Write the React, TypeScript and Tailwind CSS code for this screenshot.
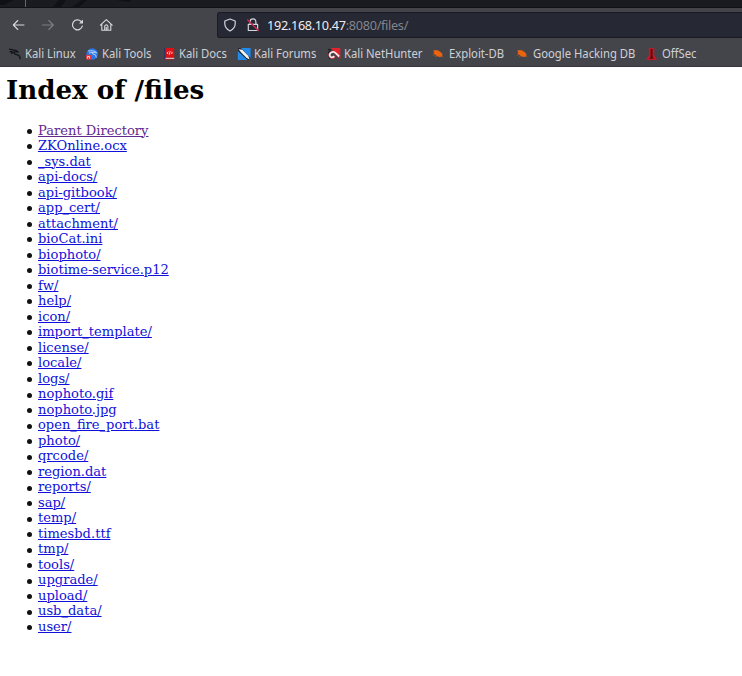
import type { ReactNode } from 'react';

const files = [
  'Parent Directory', 'ZKOnline.ocx', '_sys.dat', 'api-docs/', 'api-gitbook/', 'app_cert/', 'attachment/',
  'bioCat.ini', 'biophoto/', 'biotime-service.p12', 'fw/', 'help/', 'icon/', 'import_template/', 'license/',
  'locale/', 'logs/', 'nophoto.gif', 'nophoto.jpg', 'open_fire_port.bat', 'photo/', 'qrcode/', 'region.dat',
  'reports/', 'sap/', 'temp/', 'timesbd.ttf', 'tmp/', 'tools/', 'upgrade/', 'upload/', 'usb_data/', 'user/',
];

function Mark({ children }: { children: ReactNode }) {
  return <svg className="h-[14px] w-[14px] shrink-0" viewBox="0 0 14 14" fill="none">{children}</svg>;
}

const Bug = () => (
  <Mark>
    <path d="M1.2 3.8 3.5 3l2.8.4 2.9 2.2 1.3 2-.4 1.9-2.6.4-2.8-.9-1.7-1.6-1.5-.6.7-1z" fill="#ea640e" />
    <path d="m.7 8.3 2.3-.6M3 10l2-1.2M9.8 8.9l1.3 1.3" stroke="#a8592c" strokeWidth=".7" />
  </Mark>
);

const bookmarks: { label: string; width: string; icon: ReactNode }[] = [
  {
    label: 'Kali Linux', width: 'w-[77px]',
    icon: <Mark>
      <path d="m1 2.2 4 .6 3.2.7 2.3 1.7-2.7-.7-1.9.8.9 1.8 3 .8 1.8 1.3.6 3.2M1.5 4.9l3-.6M3 6.6l2.4-1.5" stroke="#111419" strokeWidth="1.3" />
    </Mark>,
  },
  {
    label: 'Kali Tools', width: 'w-[77px]',
    icon: <Mark>
      <circle cx="7.2" cy="7" r="5.8" fill="#2877e9" />
      <path d="m3 4 4-.3 3 .7 1.7 1.5L8 5.3l-.6 1.5 3.1 1.1.8 2.7M4 6l4-.7" stroke="#c3d6f4" strokeWidth=".9" />
      <rect x="1" y="7.8" width="5" height="5" rx="1" fill="#e23842" />
      <path d="M2.5 11.5V9.6h2v1.9" stroke="#fff" strokeWidth=".8" />
    </Mark>,
  },
  {
    label: 'Kali Docs', width: 'w-[75px]',
    icon: <Mark>
      <path d="M2.3 1h1.5v11H2.3z" fill="#222e75" />
      <path d="M3.5 1h8.7v9.8H3.5z" fill="#df1014" />
      <path d="M3.5 10.8h8.7v1.4H3.5z" fill="#d5bec2" />
      <path d="M2.6 12.2h9.6v.9H2.6z" fill="#a01923" />
      <path d="M6.2 4.7 5 5.9l1.2 1.2M9.2 4.7l1.2 1.2-1.2 1.2M8.1 4.3l-.8 3.3" stroke="#fff" strokeWidth=".8" />
    </Mark>,
  },
  {
    label: 'Kali Forums', width: 'w-[90px]',
    icon: <Mark>
      <path d="M.8 1h12.8v12H.8z" fill="#2389e9" />
      <path d="M.8 1h3l9.8 10v2h-3.2L.8 4z" fill="#23262e" />
      <path d="m1.5 2.2 3.7.6 6 6 1.5 3.7-3-1.4-5-5.2z" fill="#f4f5f4" />
    </Mark>,
  },
  {
    label: 'Kali NetHunter', width: 'w-[105px]',
    icon: <Mark>
      <path d="M4 1h9.3v11L9 8z" fill="#e3222b" />
      <path d="M1 2.3 4 3M1 6l2-2M2 8.8l.9 3" stroke="#1b1d22" strokeWidth="1.2" />
      <path d="m12.3 10.7-4.4-5C6 3.7 2.7 4.8 2.2 7.3 1.7 10 4 12 6.2 11.2l2-1.5" stroke="#d81d28" strokeWidth="1.4" />
      <path d="m12.2 9.5-4-3.8C6.6 4.4 3.5 4.8 2.8 7.3c-.5 2.2 1.3 3.6 3.2 2.9l1.4-1" stroke="#f4e9e9" strokeWidth="1.8" />
    </Mark>,
  },
  { label: 'Exploit-DB', width: 'w-[84px]', icon: <Bug /> },
  { label: 'Google Hacking DB', width: 'w-[129px]', icon: <Bug /> },
  {
    label: 'OffSec', width: 'w-[60px]',
    icon: <Mark>
      <path d="M3.8 1h5.5v8l2.2 2.5V13H1.6v-1.5L3.8 9z" fill="#c51824" />
      <path d="M6.6 2v9.5" stroke="#430b12" strokeWidth="1.8" />
      <path d="m4.8 12 1.8-2.2L8.4 12" stroke="#430b12" />
    </Mark>,
  },
];

function Toolbar() {
  return (
    <div className="flex h-[36px] items-center">
      <svg className="ml-[12px] mt-[-3px] h-[14px] w-[14px]" viewBox="0 0 14 14" fill="none" stroke="#d7d7dc" strokeWidth="1.1" strokeLinecap="round" strokeLinejoin="round">
        <path d="M12 7H1.3M5.8 2.5 1.3 7l4.5 4.5" />
      </svg>
      <svg className="ml-[15px] mt-[-3px] h-[14px] w-[14px]" viewBox="0 0 14 14" fill="none" stroke="#7d7e85" strokeWidth="1.1" strokeLinecap="round" strokeLinejoin="round">
        <path d="M1.5 7h10.8M7.8 2.5 12.3 7l-4.5 4.5" />
      </svg>
      <svg className="ml-[15px] mt-[-3px] h-[14px] w-[14px]" viewBox="0 0 14 14" fill="none" stroke="#d7d7dc" strokeWidth="1.2" strokeLinecap="round">
        <path d="M12.3 8.2A5 5 0 1 1 10.9 3.2L12 4.3" />
        <path d="M13 1.4v4H9z" fill="#d7d7dc" stroke="none" />
      </svg>
      <svg className="ml-[15px] mt-[-3px] h-[14px] w-[14px]" viewBox="0 0 14 14" fill="none" stroke="#d7d7dc" strokeWidth="1.1" strokeLinecap="round" strokeLinejoin="round">
        <path d="m1.4 7.1 5.9-5.5 5.9 5.5M2.8 6v6.3h9V6M5.7 12V8.5a1.6 1.6 0 0 1 3.2 0V12M7.3 9.2v2.8" />
      </svg>
      <div className="ml-[104px] mt-[-3px] flex h-[26px] flex-1 items-center rounded-l-[3px] border border-r-0 border-[#191a22] bg-[#262833]">
        <svg className="ml-[5px] h-[14px] w-[14px] shrink-0" viewBox="0 0 14 14" fill="none" stroke="#d4d4da" strokeWidth="1.2" strokeLinejoin="round">
          <path d="m7 1 5.2 2v2.8c0 3-1.8 5.5-5.2 7.2-3.4-1.7-5.2-4.2-5.2-7.2V3z" />
        </svg>
        <svg className="ml-[9px] h-[14px] w-[14px] shrink-0" viewBox="0 0 14 14" fill="none" stroke="#d4d4da" strokeWidth="1.2" strokeLinejoin="round">
          <path d="M4.1 6.3V3.8a2.9 2.9 0 0 1 5.8 0v2.5M2.3 6.3h9.3V12.5H2.3z" />
          <path d="m1.3 1.5 11.4 11.4" stroke="#c52950" strokeWidth="1.5" />
        </svg>
        <span className="ml-[7px] mt-px whitespace-nowrap text-[12.7px] leading-none tracking-[-0.31px] text-[#ececf0]">192.168.10.47<span className="text-[#84858e]">:8080/files/</span></span>
      </div>
    </div>
  );
}

export default function App() {
  return (
    <div className="h-[676px] w-[742px] overflow-hidden bg-white font-['Noto_Sans',sans-serif]">
      <header className="h-[67px] overflow-hidden border-b border-[#393840] bg-[#43454b]">
        <svg className="block h-[8px] w-full bg-[#191b20]" viewBox="0 0 742 8">
          <path d="M0 0h14L4 5H0M59 0h7l-6 8h-8M82 0h5l-9 8h-7M117 0h14l-2 2" fill="#101115" />
          <path d="M25.5 0v8" stroke="#65666b" />
          <path d="M0 7.5h742" stroke="#101116" />
        </svg>
        <Toolbar />
        <nav className="-mt-px flex h-[22px] items-center pl-[8px]">
          {bookmarks.map(({ label, width, icon }) => (
            <a key={label} className={`${width} flex shrink-0 items-center gap-[3px] whitespace-nowrap text-[12.2px] leading-none text-[#d0d1d6]`}>
              {icon}<span className="origin-left scale-x-[0.925]">{label}</span>
            </a>
          ))}
        </nav>
      </header>
      <main className="pl-[6px] pt-[7px] font-['DejaVu_Serif',serif] text-black">
        <h1 className="text-[26.14px] font-bold leading-[31px]">Index of /files</h1>
        <ul className="mt-[17.5px] text-[13.6px] leading-[15.53px]">
          {files.map((file, i) => (
            <li key={file} className="flex h-[15.53px] items-center pl-[21px]">
              <span className="mr-[6px] mt-[2px] h-[5px] w-[5px] shrink-0 rounded-full bg-[#111]" />
              <a className={`origin-left scale-x-[0.961] whitespace-nowrap underline ${i === 0 ? 'text-[#62298e]' : 'text-[#1010da]'}`}>{file}</a>
            </li>
          ))}
        </ul>
      </main>
    </div>
  );
}
